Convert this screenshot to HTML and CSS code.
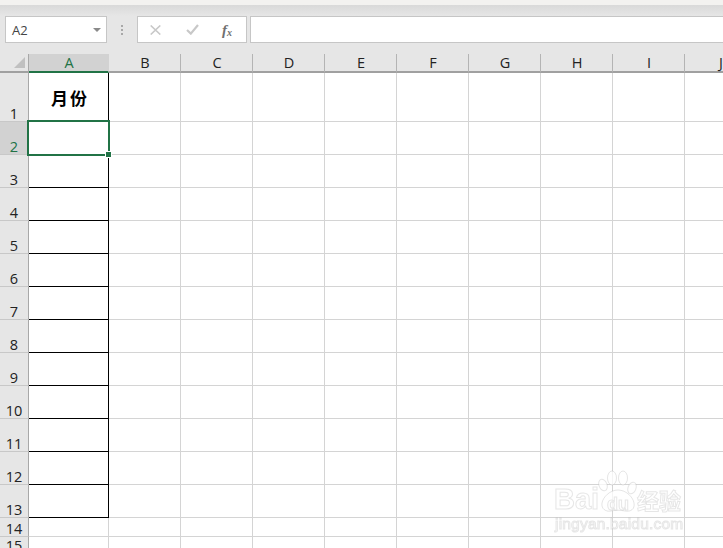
FILE: index.html
```html
<!DOCTYPE html>
<html lang="zh">
<head>
<meta charset="utf-8">
<title>Excel</title>
<link rel="stylesheet" href="styles.css">
</head>
<body>
<div class="app">
  <div class="topstrip"></div>
  <div class="formulabar">
    <div class="namebox"><span>A2</span><i class="arrow"></i></div>
    <div class="dots"><i></i><i></i><i></i></div>
    <div class="fxbuttons">
      <svg class="ico" width="11" height="10" viewBox="0 0 11 10"><path d="M.7.5 10.3 9.5M10.3.5.7 9.5" stroke="#c8c8c8" stroke-width="1.6" fill="none"/></svg>
      <svg class="ico" width="13" height="11" viewBox="0 0 13 11"><path d="M1 6 4.8 9.6 12 1" stroke="#c8c8c8" stroke-width="2.2" fill="none"/></svg>
      <span class="fx">f<sub>x</sub></span>
    </div>
    <div class="forminput"></div>
  </div>
  <div class="sheet">
    <div class="corner"><i class="tri"></i></div>
    <div class="ch ch-sel">A</div><div class="ch">B</div><div class="ch">C</div><div class="ch">D</div><div class="ch">E</div><div class="ch">F</div><div class="ch">G</div><div class="ch">H</div><div class="ch">I</div><div class="ch">J</div>

    <div class="rh">1</div><div class="c a title">月份</div><div class="c"></div><div class="c"></div><div class="c"></div><div class="c"></div><div class="c"></div><div class="c"></div><div class="c"></div><div class="c"></div><div class="c"></div>
    <div class="rh rh-sel">2</div><div class="c a"></div><div class="c"></div><div class="c"></div><div class="c"></div><div class="c"></div><div class="c"></div><div class="c"></div><div class="c"></div><div class="c"></div><div class="c"></div>
    <div class="rh">3</div><div class="c a b"></div><div class="c"></div><div class="c"></div><div class="c"></div><div class="c"></div><div class="c"></div><div class="c"></div><div class="c"></div><div class="c"></div><div class="c"></div>
    <div class="rh">4</div><div class="c a b"></div><div class="c"></div><div class="c"></div><div class="c"></div><div class="c"></div><div class="c"></div><div class="c"></div><div class="c"></div><div class="c"></div><div class="c"></div>
    <div class="rh">5</div><div class="c a b"></div><div class="c"></div><div class="c"></div><div class="c"></div><div class="c"></div><div class="c"></div><div class="c"></div><div class="c"></div><div class="c"></div><div class="c"></div>
    <div class="rh">6</div><div class="c a b"></div><div class="c"></div><div class="c"></div><div class="c"></div><div class="c"></div><div class="c"></div><div class="c"></div><div class="c"></div><div class="c"></div><div class="c"></div>
    <div class="rh">7</div><div class="c a b"></div><div class="c"></div><div class="c"></div><div class="c"></div><div class="c"></div><div class="c"></div><div class="c"></div><div class="c"></div><div class="c"></div><div class="c"></div>
    <div class="rh">8</div><div class="c a b"></div><div class="c"></div><div class="c"></div><div class="c"></div><div class="c"></div><div class="c"></div><div class="c"></div><div class="c"></div><div class="c"></div><div class="c"></div>
    <div class="rh">9</div><div class="c a b"></div><div class="c"></div><div class="c"></div><div class="c"></div><div class="c"></div><div class="c"></div><div class="c"></div><div class="c"></div><div class="c"></div><div class="c"></div>
    <div class="rh">10</div><div class="c a b"></div><div class="c"></div><div class="c"></div><div class="c"></div><div class="c"></div><div class="c"></div><div class="c"></div><div class="c"></div><div class="c"></div><div class="c"></div>
    <div class="rh">11</div><div class="c a b"></div><div class="c"></div><div class="c"></div><div class="c"></div><div class="c"></div><div class="c"></div><div class="c"></div><div class="c"></div><div class="c"></div><div class="c"></div>
    <div class="rh">12</div><div class="c a b"></div><div class="c"></div><div class="c"></div><div class="c"></div><div class="c"></div><div class="c"></div><div class="c"></div><div class="c"></div><div class="c"></div><div class="c"></div>
    <div class="rh">13</div><div class="c a b"></div><div class="c"></div><div class="c"></div><div class="c"></div><div class="c"></div><div class="c"></div><div class="c"></div><div class="c"></div><div class="c"></div><div class="c"></div>
    <div class="rh">14</div><div class="c"></div><div class="c"></div><div class="c"></div><div class="c"></div><div class="c"></div><div class="c"></div><div class="c"></div><div class="c"></div><div class="c"></div><div class="c"></div>
    <div class="rh">15</div><div class="c"></div><div class="c"></div><div class="c"></div><div class="c"></div><div class="c"></div><div class="c"></div><div class="c"></div><div class="c"></div><div class="c"></div><div class="c"></div>

    <div class="selection"><i class="handle"></i></div>
  </div>
  <div class="watermark">
    <svg class="paw" width="40" height="44" viewBox="0 0 40 44">
      <g fill="rgba(255,255,255,.75)" stroke="rgba(170,170,170,.3)" stroke-width="1">
        <ellipse cx="5" cy="15" rx="4" ry="6" transform="rotate(-20 5 15)"/>
        <ellipse cx="14" cy="8" rx="4.5" ry="7"/>
        <ellipse cx="25" cy="8" rx="4.5" ry="7"/>
        <ellipse cx="34" cy="18" rx="4" ry="6" transform="rotate(20 34 18)"/>
        <path d="M20 20C12 20 5 27 4 33 3 39 8 42 13 41 17 40 23 40 27 41 33 42 37 39 36 33 35 27 28 20 20 20Z"/>
      </g>
    </svg>
    <span class="wm-bai">Bai</span><span class="wm-du">du</span><span class="wm-cn">经验</span>
    <span class="wm-url">jingyan.baidu.com</span>
  </div>
</div>
</body>
</html>
```
FILE: styles.css
```css
html, body {
  margin: 0;
  padding: 0;
  background: #fff;
}
.app {
  position: relative;
  width: 723px;
  height: 548px;
  overflow: hidden;
  font-family: "Open Sans", "Noto Sans", sans-serif;
  background: #e6e6e6;
}
.topstrip {
  height: 5px;
  background: #f3f2f0;
}
.formulabar {
  display: flex;
  align-items: stretch;
  height: 27px;
  padding: 11px 0 11px 5px;
  background: linear-gradient(#d9d9d9 0, #e6e6e6 11px);
}
.namebox {
  display: flex;
  align-items: center;
  justify-content: space-between;
  box-sizing: border-box;
  width: 102px;
  padding: 0 5px 0 6px;
  background: #fff;
  border: 1px solid #c6c6c6;
  font-size: 13px;
  color: #444;
}
.arrow {
  width: 0;
  height: 0;
  border-left: 4px solid transparent;
  border-right: 4px solid transparent;
  border-top: 4px solid #8a8a8a;
}
.dots {
  display: flex;
  flex-direction: column;
  justify-content: center;
  gap: 2px;
  width: 30px;
  align-items: center;
}
.dots i {
  width: 2px;
  height: 2px;
  background: #a8a8a8;
}
.fxbuttons {
  display: flex;
  align-items: center;
  box-sizing: border-box;
  width: 110px;
  padding-left: 12px;
  background: #fff;
  border: 1px solid #c6c6c6;
}
.ico { flex: none; }
.ico + .ico { margin-left: 25px; }
.fx {
  margin-left: 23px;
  font-family: "Liberation Serif", serif;
  font-style: italic;
  font-weight: bold;
  font-size: 15px;
  line-height: 14px;
  color: #707070;
}
.fx sub {
  font-size: 10px;
  vertical-align: -1px;
  line-height: 0;
}
.forminput {
  flex: 1;
  margin-left: 3px;
  background: #fff;
  border: 1px solid #c6c6c6;
  border-right: 0;
}
.sheet {
  position: relative;
  display: grid;
  grid-template-columns: 29px 80px repeat(9, 72px);
  grid-template-rows: 19px 49px repeat(12, 33px) 19px 17px;
  width: 758px;
  background: #fff;
}
.corner, .ch {
  box-sizing: border-box;
  background: #e6e6e6;
  border-bottom: 2px solid #a0a0a0;
}
.corner {
  position: relative;
  border-right: 1px solid #a8a8a8;
}
.tri {
  position: absolute;
  right: 3px;
  bottom: 3px;
  width: 0;
  height: 0;
  border-left: 11px solid transparent;
  border-bottom: 11px solid #c0c0c0;
}
.ch {
  display: flex;
  align-items: flex-end;
  justify-content: center;
  padding-left: 1px;
  border-right: 1px solid #b4b4b4;
  font-size: 14.5px;
  line-height: 17px;
  color: #222;
}
.ch-sel {
  background: #d2d2d2;
  border-bottom-color: #217346;
  border-right-color: #d2d2d2;
  color: #217346;
}
.rh {
  display: flex;
  align-items: flex-end;
  justify-content: center;
  box-sizing: border-box;
  background: #e6e6e6;
  border-right: 1px solid #a8a8a8;
  border-bottom: 1px solid #c8c8c8;
  font-size: 14.5px;
  line-height: 15px;
  color: #222;
}
.rh-sel {
  background: #d2d2d2;
  color: #217346;
}
.c {
  box-sizing: border-box;
  border-right: 1px solid #d4d4d4;
  border-bottom: 1px solid #d4d4d4;
}
.a { border-right: 1px solid #000; }
.b { border-bottom: 1px solid #000; }
.title {
  display: flex;
  align-items: center;
  justify-content: center;
  padding-left: 3px;
  font-family: "Noto Sans CJK SC", sans-serif;
  font-weight: 700;
  font-size: 17px;
  letter-spacing: 2px;
  color: #000;
}
.selection {
  position: absolute;
  left: 27px;
  top: 66px;
  box-sizing: border-box;
  width: 83px;
  height: 36px;
  border: 2px solid #217346;
}
.handle {
  position: absolute;
  right: -3px;
  bottom: -3px;
  width: 5px;
  height: 5px;
  background: #217346;
  outline: 1px solid #fff;
}
.watermark {
  position: absolute;
  left: 552px;
  top: 470px;
  width: 140px;
  height: 62px;
  font-family: "Liberation Sans", sans-serif;
  color: rgba(255, 255, 255, .85);
  -webkit-text-stroke: 1px rgba(165, 165, 165, .28);
  filter: blur(.5px);
}
.paw {
  position: absolute;
  left: 46px;
  top: 0;
}
.wm-bai, .wm-du, .wm-cn, .wm-url {
  position: absolute;
  line-height: 1;
  white-space: nowrap;
}
.wm-bai {
  left: 2px;
  top: 15px;
  font-size: 29px;
  font-weight: 700;
}
.wm-du {
  left: 55px;
  top: 25px;
  font-size: 18px;
  font-weight: 700;
}
.wm-cn {
  left: 85px;
  top: 18px;
  font-family: "Noto Sans CJK SC", sans-serif;
  font-size: 22px;
  font-weight: 700;
}
.wm-url {
  left: 3px;
  top: 46px;
  font-size: 15.5px;
  letter-spacing: .2px;
}
```
